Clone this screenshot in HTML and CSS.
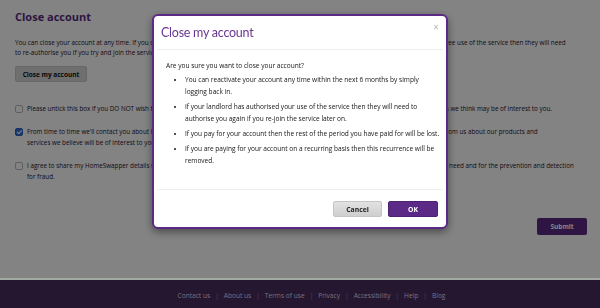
FILE: index.html
```html
<!DOCTYPE html>
<html lang="en">
<head>
<meta charset="utf-8">
<title>Close account</title>
<link rel="stylesheet" href="styles.css">
</head>
<body>
<div class="page">
  <main class="content">
    <h1 class="page-title">Close account</h1>
    <p class="intro">You can close your account at any time. If you do, your profile will be hidden from other members right away. If your landlord has authorised your free use of the service then they will need<br>to re-authorise you if you try and join the service again.</p>
    <button class="btn btn-grey" type="button">Close my account</button>
    <form class="prefs">
      <label class="pref"><span class="box"></span><span class="pref-text">Please untick this box if you DO NOT wish to receive newsletters and emails from HomeSwapper about all new features, tips, offers and services we think may be of interest to you.</span></label>
      <label class="pref"><span class="box checked"></span><span class="pref-text">From time to time we'll contact you about HomeSwapper news and events. Please tick this box if you would like to receive further information from us about our products and<br>services we believe will be of interest to you.</span></label>
      <label class="pref"><span class="box"></span><span class="pref-text">I agree to share my HomeSwapper details with my landlord, local council and other partner organisations for any of the purposes that they may need and for the prevention and detection<br>for fraud.</span></label>
      <div class="actions"><button class="btn btn-purple" type="button">Submit</button></div>
    </form>
  </main>
  <footer class="site-footer">
    <nav class="footer-links">
      <a>Contact us</a><span class="sep">|</span>
      <a>About us</a><span class="sep">|</span>
      <a>Terms of use</a><span class="sep">|</span>
      <a>Privacy</a><span class="sep">|</span>
      <a>Accessibility</a><span class="sep">|</span>
      <a>Help</a><span class="sep">|</span>
      <a>Blog</a>
    </nav>
  </footer>
</div>
<div class="overlay"></div>
<div class="modal" role="dialog">
  <div class="modal-header">
    <h2 class="modal-title">Close my account</h2>
    <span class="modal-close">×</span>
  </div>
  <div class="modal-body">
    <p class="question">Are you sure you want to close your account?</p>
    <ul class="notes">
      <li>You can reactivate your account any time within the next 6 months by simply<br>logging back in.</li>
      <li>If your landlord has authorised your use of the service then they will need to<br>authorise you again if you re-join the service later on.</li>
      <li>If you pay for your account then the rest of the period you have paid for will be lost.</li>
      <li>If you are paying for your account on a recurring basis then this recurrence will be<br>removed.</li>
    </ul>
  </div>
  <div class="modal-footer">
    <button class="mbtn mbtn-cancel" type="button">Cancel</button>
    <button class="mbtn mbtn-ok" type="button">OK</button>
  </div>
</div>
</body>
</html>
```
FILE: styles.css
```css
* { box-sizing: border-box; }
html, body { margin: 0; padding: 0; }
body {
  font-family: "Open Sans", "DejaVu Sans", sans-serif;
  background: #fff;
  color: #1e1228;
  width: 600px;
  height: 308px;
  overflow: hidden;
}
.page {
  display: flex;
  flex-direction: column;
  height: 308px;
}
.content {
  padding: 10px 13px 0 15px;
}
.page-title {
  margin: 0;
  font-size: 11px;
  line-height: 14px;
  font-weight: 700;
  color: #5a2c80;
}
.intro {
  margin: 14px 0 0;
  font-size: 6.3px;
  line-height: 10px;
  white-space: nowrap;
}
.btn {
  font-family: inherit;
  font-weight: 700;
  font-size: 6.5px;
  border-radius: 2px;
  border: 0;
  padding: 0;
  height: 16px;
}
.btn-grey {
  margin-top: 8px;
  width: 72px;
  background: #d8d8d8;
  color: #111;
  border: 1px solid #c8c8c8;
}
.prefs { margin-top: 21px; display: flex; flex-direction: column; gap: 12px; }
.pref {
  display: flex;
  align-items: flex-start;
  gap: 4px;
  font-size: 6.3px;
  line-height: 11px;
  white-space: nowrap;
}
.box {
  flex: none;
  width: 8px;
  height: 8px;
  margin-top: 2px;
  border: 1px solid #b8b8b8;
  border-radius: 2px;
  background: #fff;
  position: relative;
}
.box.checked { background: #2f6fd8; border-color: #2a5fbd; }
.box.checked::after {
  content: "";
  position: absolute;
  left: 2px; top: 0px;
  width: 2px; height: 4px;
  border: solid #fff;
  border-width: 0 1px 1px 0;
  transform: rotate(45deg);
}
.actions { display: flex; justify-content: flex-end; margin-top: 24px; }
.btn-purple {
  width: 50px;
  height: 17px;
  background: #5b2a84;
  color: #fff;
}
.site-footer {
  margin-top: auto;
  height: 30px;
  border-top: 2px solid #a3aaa3;
  background: #261730;
  position: relative;
  z-index: 20;
  display: flex;
  justify-content: center;
  align-items: center;
  padding: 2px 0 0 23px;
}
.footer-links {
  display: flex;
  align-items: center;
  gap: 5px;
  font-size: 6.6px;
  color: #7a7184;
}
.footer-links .sep { color: #4e4358; }
.overlay {
  position: fixed;
  inset: 0;
  background: rgba(0, 0, 0, 0.486);
  z-index: 10;
}
.modal {
  position: fixed;
  left: 152px;
  top: 14px;
  width: 296px;
  height: 215px;
  z-index: 30;
  background: #fff;
  border: 2px solid #5b2a86;
  border-radius: 6px;
  box-shadow: 0 3px 8px rgba(0,0,0,0.45);
  display: flex;
  flex-direction: column;
  overflow: hidden;
}
.modal-header {
  height: 34px;
  margin: 0 3px;
  padding: 0 4px;
  border-bottom: 1px solid #eeeeee;
  display: flex;
  justify-content: space-between;
  align-items: center;
}
.modal-title {
  margin: 0;
  font-family: "Lato", sans-serif;
  font-size: 12.5px;
  font-weight: 400;
  color: #6a3590;
  letter-spacing: -0.25px;
}
.modal-close {
  align-self: flex-start;
  margin-top: 6px;
  font-size: 10px;
  line-height: 10px;
  color: #b5b5b5;
}
.modal-body {
  flex: 1;
  padding: 10px 3px 0 9px;
  margin: 0 3px;
  font-size: 6.55px;
  line-height: 12px;
  color: #161616;
  white-space: nowrap;
}
.question { margin: 0 0 2px; }
.notes { margin: 0; padding-left: 19px; }
.notes li { margin-bottom: 3px; }
.modal-footer {
  margin: 0 3px;
  border-top: 1px solid #eeeeee;
  padding: 11px 5px 10px;
  display: flex;
  justify-content: flex-end;
  gap: 6px;
}
.mbtn {
  width: 49px;
  height: 16px;
  border-radius: 2px;
  font-family: inherit;
  font-size: 6.8px;
  font-weight: 700;
  padding: 0;
}
.mbtn-cancel {
  background: linear-gradient(#e2e2e2, #cfcfcf);
  border: 1px solid #c4c4c4;
  color: #222;
}
.mbtn-ok {
  width: 50px;
  background: #5b2a86;
  border: 1px solid #4d2274;
  color: #fff;
}
```
